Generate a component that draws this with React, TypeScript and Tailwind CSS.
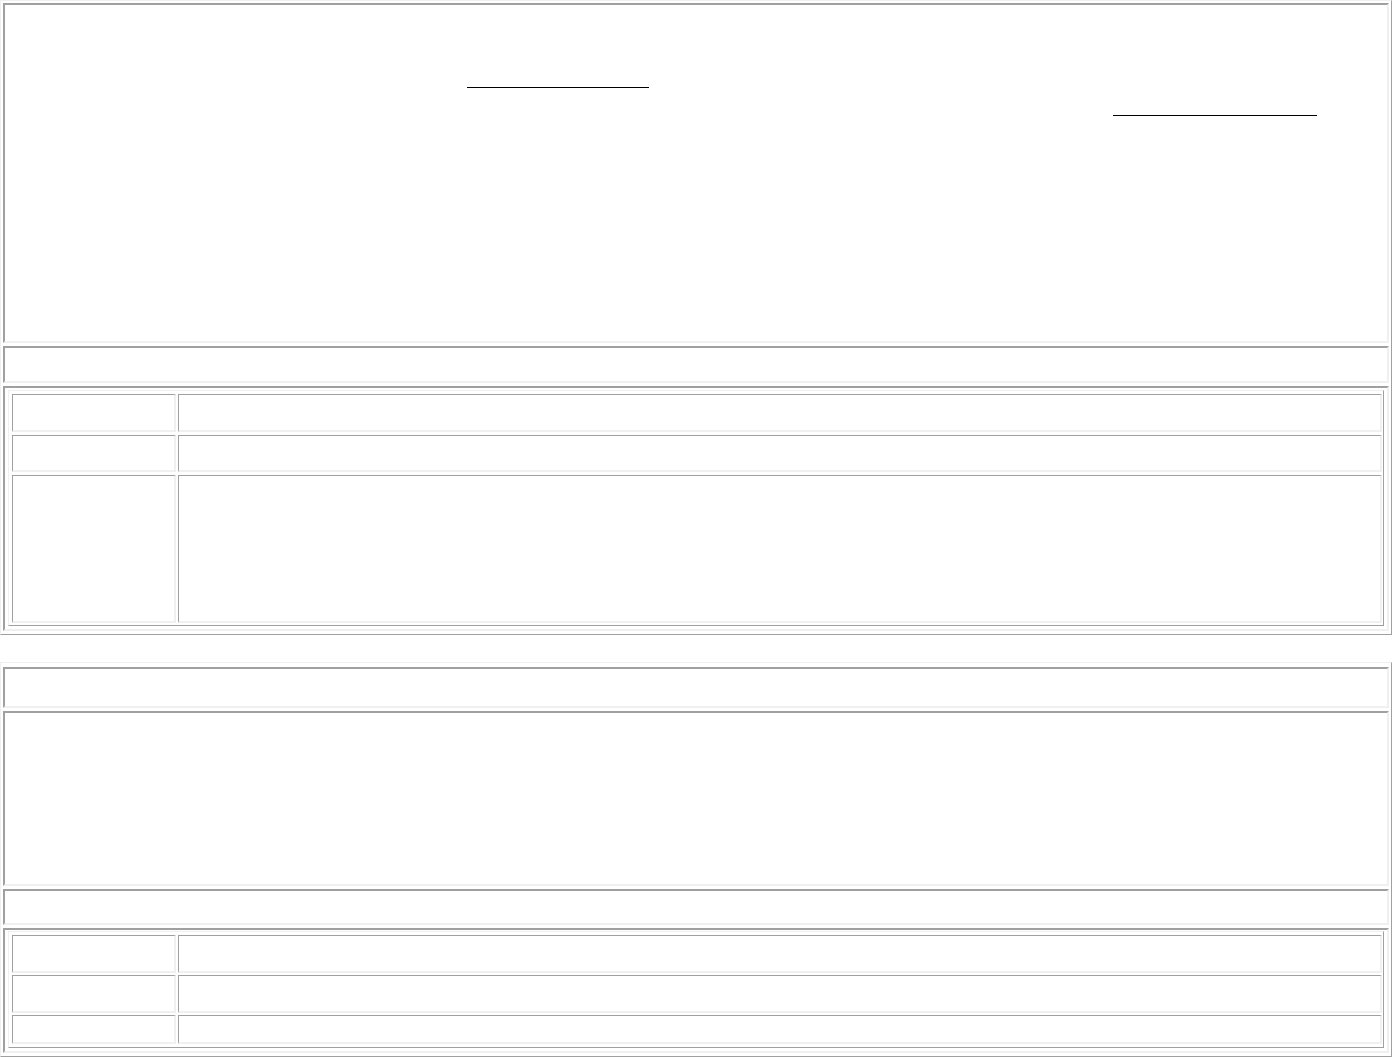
import React from "react";

const outset =
  "border border-t-[#f0f0f0] border-l-[#f0f0f0] border-r-[#a0a0a0] border-b-[#a0a0a0]";
const cell2 =
  "border-2 border-t-[#a0a0a0] border-l-[#a0a0a0] border-r-[#f0f0f0] border-b-[#f0f0f0]";
const cellIn =
  "border-t border-l border-r-2 border-b-2 border-t-[#a0a0a0] border-l-[#a0a0a0] border-r-[#f0f0f0] border-b-[#f0f0f0]";

function InnerRow({ h }: { h: string }) {
  return (
    <div className={`flex gap-[2px] ${h}`}>
      <div className={`${cellIn} w-[164px] shrink-0`} />
      <div className={`${cellIn} flex-1`} />
    </div>
  );
}

export default function App() {
  return (
    <div
      className="w-[1392px] bg-white"
      style={{ fontFamily: '"Times New Roman", "Liberation Serif", serif' }}
    >
      {/* Table 1 */}
      <div className={`${outset} flex flex-col gap-[3px] p-[2px] pb-[3px]`}>
        <div className={`${cell2} h-[340px]`}>
          <div className="ml-[462px] mt-[82px] h-px w-[182px] bg-black" />
          <div className="ml-[1108px] mt-[27px] h-px w-[204px] bg-black" />
        </div>
        <div className={`${cell2} h-[37px]`} />
        <div className={`${cell2} h-[245px] px-[3px] pt-[2px]`}>
          <div className={`${outset} flex flex-col gap-[3px] pl-[3px] pr-[1px] pt-[3px] pb-[2px]`}>
            <InnerRow h="h-[38px]" />
            <InnerRow h="h-[37px]" />
            <InnerRow h="h-[148px]" />
          </div>
        </div>
      </div>

      {/* Table 2 */}
      <div className={`${outset} mt-[27px] flex flex-col gap-[3px] p-[2px] pt-[4px] pb-[3px]`}>
        <div className={`${cell2} h-[41px]`} />
        <div className={`${cell2} h-[175px]`} />
        <div className={`${cell2} h-[36px]`} />
        <div className={`${cell2} h-[125px] px-[3px] pt-[1px]`}>
          <div className={`${outset} flex flex-col gap-[2px] pl-[3px] pr-[1px] pt-[3px] pb-[3px]`}>
            <InnerRow h="h-[38px]" />
            <InnerRow h="h-[38px]" />
            <InnerRow h="h-[29px]" />
          </div>
        </div>
      </div>
    </div>
  );
}
